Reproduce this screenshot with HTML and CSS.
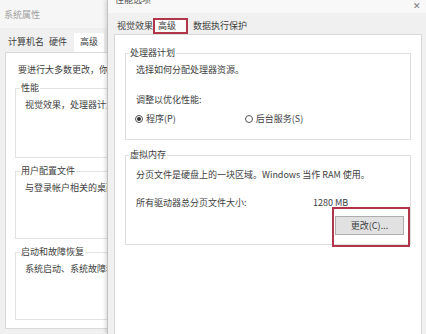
FILE: index.html
```html
<!DOCTYPE html>
<html lang="zh-CN">
<head>
    <meta charset="UTF-8">
    <meta name="viewport" content="width=device-width, initial-scale=1.0">
    <title>性能选项</title>
    <link rel="stylesheet" href="styles.css">
</head>
<body>
    <div class="desk">
        <!-- 系统属性 (behind) -->
        <div class="dlg sys">
            <div class="sys-title">系统属性</div>
            <div class="sys-tabs">
                <span class="stab">计算机名</span>
                <span class="stab">硬件</span>
                <span class="stab on">高级</span>
            </div>
            <div class="sys-panel">
                <p class="line first">要进行大多数更改，你</p>
                <fieldset class="sgroup g1">
                    <legend>性能</legend>
                    <p class="line">视觉效果，处理器计划</p>
                </fieldset>
                <fieldset class="sgroup">
                    <legend>用户配置文件</legend>
                    <p class="line">与登录帐户相关的桌面</p>
                </fieldset>
                <fieldset class="sgroup">
                    <legend>启动和故障恢复</legend>
                    <p class="line">系统启动、系统故障和</p>
                </fieldset>
            </div>
        </div>

        <!-- 性能选项 (front) -->
        <div class="dlg perf">
            <div class="perf-title">
                <span class="title">性能选项</span>
                <span class="close">✕</span>
            </div>
            <div class="perf-tabs">
                <span class="ptab">视觉效果</span>
                <span class="ptab on">高级</span>
                <span class="ptab last">数据执行保护</span>
            </div>
            <div class="perf-panel">
                <fieldset class="pgroup cpu">
                    <legend>处理器计划</legend>
                    <p class="line">选择如何分配处理器资源。</p>
                    <p class="line adjust">调整以优化性能:</p>
                    <div class="radios">
                        <label class="opt"><span class="radio checked"></span>程序(P)</label>
                        <label class="opt second"><span class="radio"></span>后台服务(S)</label>
                    </div>
                </fieldset>
                <fieldset class="pgroup vm">
                    <legend>虚拟内存</legend>
                    <p class="line">分页文件是硬盘上的一块区域。Windows 当作 RAM 使用。</p>
                    <div class="size-row">
                        <span class="size-label">所有驱动器总分页文件大小:</span>
                        <span class="size-val">1280 MB</span>
                    </div>
                    <div class="btn-row">
                        <span class="btn-wrap">
                            <button type="button" class="btn">更改(C)...</button>
                            <span class="mark"></span>
                        </span>
                    </div>
                </fieldset>
            </div>
        </div>
    </div>
</body>
</html>
```

FILE: styles.css
```css
body {
    margin: 0;
    font-family: "Noto Sans CJK SC", "Noto Sans", sans-serif;
    font-size: 9px;
    color: #404040;
    background: #f0f0f0;
    overflow: hidden;
}
p {
    margin: 0;
}
.line {
    line-height: 12px;
    white-space: nowrap;
}
.desk {
    display: flex;
    width: 426px;
    height: 334px;
}
.dlg {
    height: 334px;
    overflow: hidden;
}

/* left window */
.sys {
    width: 107px;
    flex: none;
    background: #f0f0f0;
}
.sys-title {
    height: 28px;
    padding-left: 4px;
    line-height: 30px;
    color: #a0a0a0;
    background: #f6f6f6;
}
.sys-tabs {
    height: 24px;
    display: flex;
    align-items: flex-end;
    padding-left: 8px;
    white-space: nowrap;
}
.stab {
    line-height: 12px;
    margin-bottom: 4px;
}
.stab + .stab {
    margin-left: 5px;
}
.stab.on {
    margin: 0 0 0 7px;
    padding: 3px 6px 4px;
    background: #fff;
}
.sys-panel {
    margin-left: 5px;
    height: 275px;
    background: #fff;
    border: 1px solid #d9d9d9;
    border-right: none;
}
.sys-panel .first {
    margin: 11px 0 0 12px;
}
.sgroup {
    margin: 6px 0 0 9px;
    padding: 0 0 44px 4px;
    border: 1px solid #e2e2e2;
    border-right: none;
    min-width: 0;
}
.sgroup + .sgroup {
    margin-top: 7px;
}
.sgroup.g1 {
    padding-bottom: 46px;
}
.sgroup legend,
.pgroup legend {
    padding: 0 1px;
    line-height: 12px;
}
.sgroup .line {
    margin: 5px 0 0 5px;
}

/* front window */
.perf {
    flex: 1;
    border-left: 1px solid #c2c2c2;
    box-shadow: -2px 0 3px rgba(0, 0, 0, 0.12);
    background: #f0f0f0;
}
.perf-title {
    height: 13px;
    display: flex;
    justify-content: space-between;
    align-items: flex-start;
    padding: 0 5px 0 7px;
    background: #f8f8f8;
}
.title {
    line-height: 12px;
    margin-top: -6px;
    color: #555;
}
.close {
    font-size: 9px;
    line-height: 11px;
    color: #777;
}
.perf-tabs {
    height: 21px;
    display: flex;
    align-items: flex-end;
    padding-left: 9px;
    white-space: nowrap;
}
.ptab {
    line-height: 12px;
    margin-bottom: 2px;
}
.ptab.on {
    box-sizing: border-box;
    height: 16px;
    margin: 0;
    padding: 0 10px 0 3px;
    border: 2px solid #b2364a;
    background: #fbfbfb;
}
.ptab.last {
    margin-left: 5px;
}
.perf-panel {
    margin: 0 4px 0 6px;
    height: 310px;
    background: #fff;
    border: 1px solid #d8d8d8;
}
.pgroup {
    margin: 12px 10px 0;
    padding: 0 0 14px 3px;
    border: 1px solid #dedede;
    min-width: 0;
}
.pgroup .line {
    margin-left: 7px;
}
.cpu .line {
    margin-top: 5px;
}
.cpu .adjust {
    margin-top: 18px;
}
.radios {
    display: flex;
    margin: 7px 0 0 6px;
    line-height: 12px;
}
.opt {
    display: flex;
    align-items: center;
}
.opt.second {
    margin-left: 69px;
}
.radio {
    box-sizing: border-box;
    width: 8px;
    height: 8px;
    margin-right: 3px;
    border: 1px solid #555;
    border-radius: 50%;
    display: flex;
    align-items: center;
    justify-content: center;
}
.radio.checked::after {
    content: "";
    width: 4px;
    height: 4px;
    border-radius: 50%;
    background: #333;
}
.pgroup.vm {
    margin-top: 9px;
    padding-bottom: 9px;
}
.vm .line {
    margin-top: 8px;
}
.size-row {
    display: flex;
    margin: 16px 0 0 7px;
    line-height: 12px;
}
.size-label {
    width: 177px;
}
.btn-row {
    display: flex;
    justify-content: flex-end;
    margin-top: 7px;
    padding-right: 6px;
}
.btn-wrap {
    position: relative;
    display: flex;
}
.btn {
    width: 69px;
    height: 19px;
    padding: 0;
    font-family: inherit;
    font-size: 9px;
    color: #404040;
    background: #e1e1e1;
    border: 1px solid #adadad;
}
.mark {
    position: absolute;
    left: -3px;
    right: -6px;
    top: -9px;
    bottom: -12px;
    border: 2px solid #b2364a;
}
```
